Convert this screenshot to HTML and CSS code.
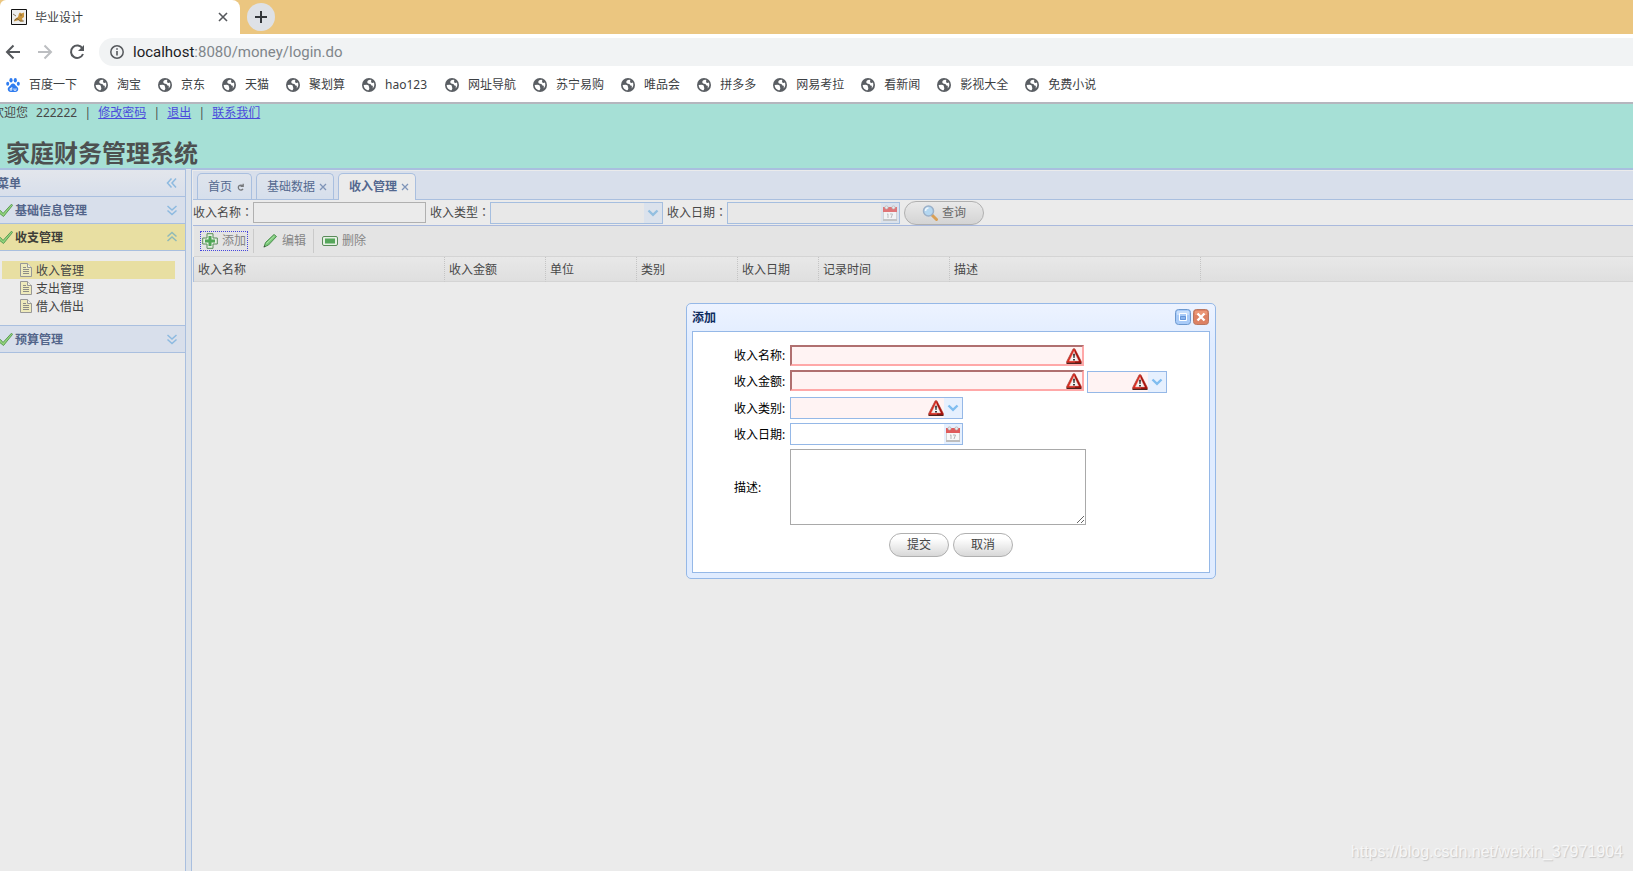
FILE: index.html
```html
<!DOCTYPE html>
<html lang="zh-CN">
<head>
<meta charset="utf-8">
<title>毕业设计</title>
<link rel="stylesheet" href="styles.css">
</head>
<body>
<svg class="defs" aria-hidden="true">
  <symbol id="globe" viewBox="0 0 14 14"><circle cx="7" cy="7" r="7" fill="#5a5e63"/><path d="M1.700 7 4.600 6.800C6 6.900 7 7.500 6.900 8.600 6.800 9.600 7.500 9.700 7.300 10.700L6.600 12.300C3.900 12.100 1.700 9.900 1.700 7z" fill="#fff"/><path d="M8.300 1.800C6.300 2 5.200 3 5.300 4.300 5.400 5.600 6.700 5.700 8 5.900 9.300 6.100 8.800 7.500 10 7.600 11 7.700 11 8.800 10.600 10.600 12.600 8.700 12.700 6.200 11.800 4.600 10.600 5.300 9.400 5 9.100 4 8.900 3.300 9.300 2.600 9.300 2z" fill="#fff"/></symbol>
  <symbol id="check" viewBox="0 0 16 16"><path d="M1 10 3.500 8.500 6 11.500 14.500 2.200 15.600 3.300 6.500 14.500z" fill="#93d67c" stroke="#5a9a55" stroke-width="1"/></symbol>
  <symbol id="down2" viewBox="0 0 16 16"><path d="M3.500 4 8 8 12.500 4M3.500 8.500 8 12.500l4.500-4" fill="none" stroke="#8dbae0" stroke-width="1.500"/></symbol>
  <symbol id="up2" viewBox="0 0 16 16"><path d="M3.500 7.500 8 3.500l4.500 4M3.500 12 8 8l4.500 4" fill="none" stroke="#8fb9b8" stroke-width="1.500"/></symbol>
  <symbol id="page" viewBox="0 0 12 14"><path d="M.5.500h7l4 4v9H.5z" fill="#eeeabb" stroke="#989898"/><path d="M7.500.500v4h4" fill="#f1f1e4" stroke="#989898"/><path d="M3 4.500h3M3 6.500h6M3 8.500h6M3 10.500h6" stroke="#8d8d86"/></symbol>
  <symbol id="warn" viewBox="0 0 16 16"><path d="M7.200.800h1.600L15.300 13.500v1.500H.7v-1.500z" fill="#dc2a1e" stroke="#a84a42" stroke-width=".8"/><path d="M9 1.500 15 13.500v1.500H9z" fill="#a5120c"/><path d="M.5 15.400h15" stroke="#4e2420" stroke-width="1.200"/><path d="M8 3.300 12.700 13H3.300z" fill="#f4f4f4" stroke="#ee9a90" stroke-width=".5"/><path d="M7.200 5.800h1.600L8.500 10h-1zM7.200 11h1.600v1.500H7.200z" fill="#111"/></symbol>
  <symbol id="cal" viewBox="0 0 14 16"><path d="M.5 2.500h13v12H.5z" fill="#f8f8f8" stroke="#d0d0d0"/><path d="M0 2h14v5H0z" fill="#e05b5b"/><path d="M0 15h14" stroke="#bdbdbd" stroke-width="2"/><circle cx="3.500" cy="2.500" r="1.600" fill="#eee" stroke="#aaa" stroke-width=".7"/><circle cx="10.500" cy="2.500" r="1.600" fill="#eee" stroke="#aaa" stroke-width=".7"/><path d="m4 9.500 1-.7v4.200M7 9h2.500L8 13" fill="none" stroke="#b5b5b5"/></symbol>
  <symbol id="arrow" viewBox="0 0 12 8"><path d="M1.500 1.500 6 5.800l4.500-4.300" fill="none" stroke="currentColor" stroke-width="2.400"/></symbol>
  <symbol id="x" viewBox="0 0 8 8"><path d="m1 1 6 6M7 1 1 7" stroke="currentColor" stroke-width="1.300"/></symbol>
</svg>

<header class="browser">
  <div class="tabstrip">
    <div class="btab">
      <svg class="favicon" viewBox="0 0 16 16"><path d="M.5.500h15v15H.5z" fill="#eee" stroke="#111"/><path d="M3 12.500 4.500 9.500 7 8l1-3.500 1-1 1.500 1 2.500-1V8l-2 1.500 1 3H9l-1-1.500z" fill="#c9953f"/><path d="m2 5 3 2M3 11.500l3-2 3 2.500h4M9 6h2" stroke="#6b5a3c" stroke-width=".8" fill="none"/></svg>
      <span class="btitle">毕业设计</span>
      <button class="bclose" aria-label="关闭标签页"><svg width="10" height="10" viewBox="0 0 10 10"><path d="m1 1 8 8M9 1 1 9" stroke="#55585c" stroke-width="1.600"/></svg></button>
    </div>
    <button class="newtab" aria-label="新标签页"><svg width="12" height="12" viewBox="0 0 12 12"><path d="M6 0v12M0 6h12" stroke="#33363a" stroke-width="2"/></svg></button>
  </div>
  <div class="navbar">
    <button class="nav" aria-label="后退"><svg width="16" height="16" viewBox="0 0 16 16"><path d="M15 8H2M8.500 1.500 2 8l6.500 6.500" fill="none" stroke="#55585c" stroke-width="2"/></svg></button>
    <button class="nav" aria-label="前进"><svg width="16" height="16" viewBox="0 0 16 16"><path d="M1 8h13M7.500 1.500 14 8l-6.500 6.500" fill="none" stroke="#bcbec1" stroke-width="2"/></svg></button>
    <button class="nav" aria-label="刷新"><svg width="16" height="16" viewBox="0 0 16 16"><path d="M13.500 4.500A6.200 6.200 0 1 0 14 10" fill="none" stroke="#55585c" stroke-width="2"/><path d="M15 1v6H9z" fill="#55585c"/></svg></button>
    <div class="address">
      <svg width="14" height="14" viewBox="0 0 14 14"><circle cx="7" cy="7" r="6.200" fill="none" stroke="#55585c" stroke-width="1.500"/><path d="M7 6v4.500M7 3.200v1.600" stroke="#55585c" stroke-width="1.600"/></svg>
      <span class="url"><b>localhost</b>:8080/money/login.do</span>
    </div>
  </div>
  <nav class="bookmarks">
    <a href="#"><svg viewBox="0 0 14 14"><g fill="#2f7cf0"><ellipse cx="5" cy="2.300" rx="1.600" ry="2.200"/><ellipse cx="9.300" cy="2.300" rx="1.600" ry="2.200"/><ellipse cx="1.700" cy="5.800" rx="1.500" ry="2"/><ellipse cx="12.300" cy="5.800" rx="1.500" ry="2"/><path d="M7 5.500c1.800 0 2.300 1.800 3.500 2.800 1.600 1.400 2 2.300 1.600 3.700-.4 1.700-2 2-5.100 2s-4.700-.3-5.100-2c-.4-1.400 0-2.300 1.600-3.700C4.700 7.300 5.200 5.500 7 5.500z"/></g><path d="M5.800 9v3.200H4.200V10.500h1.500M8 10.300v2h2v-2" fill="none" stroke="#fff" stroke-width=".8"/></svg>百度一下</a>
    <a href="#"><svg><use href="#globe"/></svg>淘宝</a>
    <a href="#"><svg><use href="#globe"/></svg>京东</a>
    <a href="#"><svg><use href="#globe"/></svg>天猫</a>
    <a href="#"><svg><use href="#globe"/></svg>聚划算</a>
    <a href="#"><svg><use href="#globe"/></svg><span class="latin">hao123</span></a>
    <a href="#"><svg><use href="#globe"/></svg>网址导航</a>
    <a href="#"><svg><use href="#globe"/></svg>苏宁易购</a>
    <a href="#"><svg><use href="#globe"/></svg>唯品会</a>
    <a href="#"><svg><use href="#globe"/></svg>拼多多</a>
    <a href="#"><svg><use href="#globe"/></svg>网易考拉</a>
    <a href="#"><svg><use href="#globe"/></svg>看新闻</a>
    <a href="#"><svg><use href="#globe"/></svg>影视大全</a>
    <a href="#"><svg><use href="#globe"/></svg>免费小说</a>
  </nav>
</header>

<div class="app">
  <header class="north">
    <div class="welcome"><span class="hello">欢迎您</span><span>222222</span><i>|</i><a href="#">修改密码</a><i>|</i><a href="#">退出</a><i>|</i><a href="#">联系我们</a></div>
    <h1>家庭财务管理系统</h1>
  </header>
  <div class="columns">
    <aside class="west">
      <div class="west-title"><span>菜单</span><button class="tool" aria-label="折叠"><svg class="ico" viewBox="0 0 16 16"><path d="M7.500 3.500 3.500 8l4 4.500M12 3.500 8 8l4 4.500" fill="none" stroke="#8dbae0" stroke-width="1.500"/></svg></button></div>
      <div class="acc"><svg class="ico"><use href="#check"/></svg><span>基础信息管理</span><button class="tool" aria-label="展开"><svg class="ico"><use href="#down2"/></svg></button></div>
      <div class="acc open"><svg class="ico"><use href="#check"/></svg><span>收支管理</span><button class="tool" aria-label="收起"><svg class="ico"><use href="#up2"/></svg></button></div>
      <ul class="tree">
        <li class="on"><svg><use href="#page"/></svg><span>收入管理</span></li>
        <li><svg><use href="#page"/></svg><span>支出管理</span></li>
        <li><svg><use href="#page"/></svg><span>借入借出</span></li>
      </ul>
      <div class="acc"><svg class="ico"><use href="#check"/></svg><span>预算管理</span><button class="tool" aria-label="展开"><svg class="ico"><use href="#down2"/></svg></button></div>
    </aside>
    <main class="center">
      <div class="tabs">
        <div class="tab home">首页<button class="tool" aria-label="刷新"><svg width="8" height="8" viewBox="0 0 8 8"><path d="M5.800 3A2.500 2.500 0 1 0 6 5.800M6.200.800v2.600H3.500" fill="none" stroke="#77797d" stroke-width="1.300"/></svg></button></div>
        <div class="tab">基础数据<button class="tool" aria-label="关闭"><svg width="8" height="8"><use href="#x"/></svg></button></div>
        <div class="tab active">收入管理<button class="tool" aria-label="关闭"><svg width="8" height="8"><use href="#x"/></svg></button></div>
      </div>
      <form class="search">
        <label for="q-name">收入名称<span class="colon" lang="zh-TW">：</span></label><input id="q-name" class="plain" type="text">
        <label for="q-type">收入类型<span class="colon" lang="zh-TW">：</span></label><span class="combo dim"><select id="q-type"></select><span class="addon"><svg width="12" height="8"><use href="#arrow"/></svg></span></span>
        <label for="q-date">收入日期<span class="colon" lang="zh-TW">：</span></label><span class="combo dim"><input id="q-date" type="text"><span class="addon"><svg class="cal"><use href="#cal"/></svg></span></span>
        <button type="button" class="pill find"><svg class="ico" viewBox="0 0 16 16"><path d="m10 10 4.500 4.500" stroke="#d9a056" stroke-width="3" stroke-linecap="round"/><circle cx="6.500" cy="6" r="5" fill="#b4d7f1" stroke="#9bb0c8" stroke-width="1.500"/><path d="M3.500 6a3 3 0 0 1 3-3" stroke="#eef6fc" stroke-width="1.500" fill="none"/></svg>查询</button>
      </form>
      <div class="toolbar">
        <button class="tb focus"><svg class="ico" viewBox="0 0 16 16"><path d="M5 .7h6V5h4.300v6H11v4.300H5V11H.7V5H5z" fill="#e6f0e4" stroke="#5a8c5a"/><path d="M6.500 3h3v3.500H13v3H9.500V13h-3V9.500H3v-3h3.500z" fill="#4fa655"/></svg>添加</button>
        <i class="sep"></i>
        <button class="tb"><svg class="ico" viewBox="0 0 16 16"><path d="m2 14 1.500-4.500L12 1.500l2.500 2L6.500 12z" fill="#79c878" stroke="#4e8f50"/><path d="m4.500 10.500 8-7.500" stroke="#b5e5ac"/><path d="m1.500 14.500 1-2 1 1z" fill="#444"/></svg>编辑</button>
        <i class="sep"></i>
        <button class="tb"><svg class="ico" viewBox="0 0 16 16"><rect x=".5" y="3.500" width="15" height="9" rx="1.500" fill="#e6f0e4" stroke="#5a8c5a"/><path d="M3 5.500h10v5H3z" fill="#55a65a"/></svg>删除</button>
      </div>
      <table class="grid">
        <colgroup><col class="w251"><col class="w101"><col class="w91"><col class="w101"><col class="w81"><col class="w131"><col class="w251"><col></colgroup>
        <thead><tr><th>收入名称</th><th>收入金额</th><th>单位</th><th>类别</th><th>收入日期</th><th>记录时间</th><th>描述</th><td></td></tr></thead>
      </table>
    </main>
  </div>
</div>

<section class="window" role="dialog" aria-labelledby="dlg-title">
  <div class="win-head">
    <h2 id="dlg-title">添加</h2>
    <button class="tool" aria-label="最大化"><svg class="ico" viewBox="0 0 16 16"><rect x=".5" y=".5" width="15" height="15" rx="3" fill="#a9cbf8" stroke="#6c98cf"/><path d="M2 2h12v4H2z" fill="#c8defb"/><path d="M4.500 4.500h7v7h-7z" fill="#a9cbf8" stroke="#fff"/><path d="M5.500 7.500h5v3h-5z" fill="#8ab4ee" stroke="#5b8cd2" stroke-width=".8"/></svg></button>
    <button class="tool" aria-label="关闭"><svg class="ico" viewBox="0 0 16 16"><rect x=".5" y=".5" width="15" height="15" rx="3" fill="#dd8163" stroke="#b9765f"/><path d="M2 2h12v4H2z" fill="#eb9675"/><path d="m4.500 4.500 7 7M11.500 4.500l-7 7" stroke="#fff" stroke-width="2.400"/></svg></button>
  </div>
  <form class="win-body">
    <div class="fields">
      <label for="f-name">收入名称:</label>
      <span class="bad"><input id="f-name" type="text"><svg class="ico"><use href="#warn"/></svg></span>
      <label for="f-sum">收入金额:</label>
      <div class="pair">
        <span class="bad"><input id="f-sum" type="text"><svg class="ico"><use href="#warn"/></svg></span>
        <span class="combo req unit"><select aria-label="单位"></select><svg class="ico"><use href="#warn"/></svg><span class="addon"><svg width="12" height="8"><use href="#arrow"/></svg></span></span>
      </div>
      <label for="f-kind">收入类别:</label>
      <span class="combo req"><select id="f-kind"></select><svg class="ico"><use href="#warn"/></svg><span class="addon"><svg width="12" height="8"><use href="#arrow"/></svg></span></span>
      <label for="f-date">收入日期:</label>
      <span class="combo"><input id="f-date" type="text"><span class="addon"><svg class="cal"><use href="#cal"/></svg></span></span>
      <label for="f-desc">描述:</label>
      <textarea id="f-desc"></textarea>
    </div>
    <div class="actions"><button type="button" class="pill">提交</button><button type="button" class="pill">取消</button></div>
  </form>
</section>
<div class="watermark">https://blog.csdn.net/weixin_37971904</div>
</body>
</html>
```

FILE: styles.css
```css
* { box-sizing: border-box; }
body {
  margin: 0;
  min-height: 100vh;
  display: flex;
  flex-direction: column;
  overflow: hidden;
  position: relative;
  background: #ebebeb;
  font: 12px/18px "Noto Sans", "Noto Sans CJK SC", sans-serif;
  color: #484848;
}
svg { display: block; flex: none; }
.defs { position: absolute; width: 0; height: 0; }
button, input, select, textarea { font: inherit; color: inherit; margin: 0; }
button { border: 0; padding: 0; background: none; display: flex; align-items: center; justify-content: center; }
i { font-style: normal; }
.ico { width: 16px; height: 16px; }

/* browser frame */
.browser { background: #fff; border-bottom: 2px solid #b5b6be; }
.tabstrip { display: flex; height: 34px; background: #ebc680; align-items: center; gap: 7px; }
.btab {
  display: flex; align-items: center; gap: 8px;
  width: 240px; height: 34px; padding: 0 12px 0 11px;
  background: #fff; border-radius: 6px 8px 0 0;
}
.favicon { width: 16px; height: 16px; }
.btitle { flex: 1; padding-top: 1px; color: #3c4043; }
.newtab { width: 28px; height: 28px; border-radius: 50%; background: #dee1e6; }
.navbar { display: flex; align-items: center; height: 36px; padding: 4px 0 4px 5px; gap: 16px; }
.nav { width: 16px; height: 16px; }
.address {
  flex: 1; display: flex; align-items: center; gap: 9px;
  height: 28px; margin-left: -2px; padding-left: 11px;
  background: #f1f3f4; border-radius: 14px 0 0 14px;
}
.url { font: 15px/20px Roboto, "Noto Sans", sans-serif; color: #80868b; }
.url b { font-weight: 400; color: #202124; }
.bookmarks { display: flex; align-items: center; height: 32px; gap: 17px; padding: 0 0 3px 6px; }
.bookmarks a { display: flex; align-items: center; gap: 9px; color: #3c4043; text-decoration: none; white-space: nowrap; }
.bookmarks svg { width: 14px; height: 14px; }
.latin { width: 43px; }

/* page: scrolled 8px past the left edge */
.app { flex: 1; display: flex; flex-direction: column; margin-left: -8px; }
.north { background: #a6e0d6; border-bottom: 1px solid #a9bfdf; }
.welcome { display: flex; }
.welcome .hello { margin-right: 8px; }
.welcome i { width: 21px; text-align: center; }
.welcome a { color: #4b4bdc; }
h1 { margin: 16px 0 0 14px; font-size: 24px; line-height: 30px; font-weight: 700; color: #4d5050; }
.columns { flex: 1; display: flex; gap: 5px; background: #dce2ea; }

.west { width: 194px; flex: none; background: #ebebeb; border: solid #a9bfdf; border-width: 1px 1px 0 0; color: #53658a; font-weight: 700; }
.west-title, .acc { display: flex; align-items: center; padding: 0 5px; border-bottom: 1px solid #a9bfdf; background: #d8dfeb; }
.west-title { height: 27px; background: linear-gradient(#e3e6ec, #d8dfeb); }
.acc { height: 27px; gap: 2px; }
.acc span, .west-title span { flex: 1; padding-top: 2px; }
.acc.open { background: #e8dfa2; color: #3f3f3a; }
.tree { list-style: none; margin: 0; padding: 10px; border-bottom: 1px solid #a9bfdf; font-weight: 400; color: #444; }
.tree li { display: flex; align-items: center; gap: 4px; height: 18px; padding-left: 18px; }
.tree span { padding-top: 2px; }
.tree svg { width: 12px; height: 14px; }
.tree .on { background: #e8dfa2; }

.center { flex: 1; min-width: 0; display: flex; flex-direction: column; background: #ebebeb; border: solid #a9bfdf; border-width: 1px 0 0 1px; padding: 1px 0 0 1px; }
.tabs { display: flex; align-items: flex-end; gap: 4px; height: 29px; padding-left: 4px; background: #d8dfeb; border-bottom: 1px solid #a9bfdf; }
.tab { display: flex; align-items: center; gap: 3px; height: 26px; padding: 0 6px 0 10px; border: 1px solid #a9bfdf; border-bottom: 0; border-radius: 5px 5px 0 0; background: linear-gradient(#dfe4ec, #d6dfec); color: #53688f; }
.tab.home { gap: 4px; }
.tab .tool { width: 9px; color: #7f94b8; }
.tab.active { margin-bottom: -1px; height: 27px; background: #ebebeb; font-weight: 700; }

.search { display: flex; align-items: center; gap: 4px; height: 26px; border-bottom: 1px solid #a9b9dd; }
.search label { width: 56px; white-space: nowrap; }
.colon { font-family: "Noto Sans CJK TC", sans-serif; }
.plain { width: 173px; height: 21px; border: 1px solid #b0b0b0; background: #ebebeb; }
.combo { display: flex; align-items: center; width: 173px; height: 22px; border: 1px solid #95b8e7; background: #fff; color: #7fbdf0; }
.combo input, .combo select { flex: 1; min-width: 0; height: 20px; border: 0; padding: 0 2px; background: transparent; appearance: none; outline: 0; }
.combo.dim { background: #e8e8e8; border-color: #a5bedf; color: #93bfe0; }
.dim .addon { background: #dbe2ec; }
.dim .cal { opacity: .8; }
.addon { width: 18px; height: 20px; display: flex; align-items: center; justify-content: center; background: #e6f0fe; }
.cal { width: 14px; height: 16px; }
.pill { width: 60px; height: 24px; border: 1px solid #b0b0b0; border-radius: 12px; background: linear-gradient(#fff 20%, #d8d8d8); color: #444; }
.find { width: 80px; gap: 4px; background: linear-gradient(#e9e9e9, #d4d4d4); color: #6a6a6a; }

.toolbar { display: flex; align-items: center; height: 31px; margin-left: 1px; padding-left: 7px; background: #e4e4e4; border-bottom: 1px solid #d4d4d4; color: #858585; }
.tb { gap: 4px; height: 18px; padding: 0 1px; }
.focus { outline: 1px dotted #4646dd; }
.sep { width: 1px; height: 24px; margin: 0 7px 0 6px; background: #cacaca; }
.grid { width: 100%; table-layout: fixed; border-collapse: separate; border-spacing: 0; border-left: 1px solid #a9bfdf; }
.grid th, .grid td { height: 25px; padding: 2px 4px 0; text-align: left; font-weight: 400; border-bottom: 1px solid #d4d4d4; background: linear-gradient(#e8e8e8, #dfdfdf); }
.grid th { border-right: 1px dotted #c4c4c4; }
.w251 { width: 251px; } .w131 { width: 131px; } .w101 { width: 101px; } .w91 { width: 91px; } .w81 { width: 81px; }

/* floating dialog */
.window { position: absolute; left: 686px; top: 303px; width: 530px; padding: 0 5px 5px; border: 1px solid #95b8e7; border-radius: 5px; background: linear-gradient(#edf3ff, #e0ecff 40px); color: #000; }
.win-head { display: flex; align-items: center; gap: 2px; height: 27px; padding: 0 1px 2px 0; }
.win-head h2 { flex: 1; margin: 0; padding-top: 2px; font-size: 12px; line-height: 18px; color: #0e2d5f; }
.win-body { padding: 13px 41px 15px; border: 1px solid #95b8e7; background: #fff; }
.fields { display: grid; grid-template-columns: 52px 1fr; gap: 4px; align-items: center; }
.fields label { padding-top: 1px; white-space: nowrap; }
.bad { display: flex; align-items: center; width: 294px; height: 21px; border: 2px solid; border-color: #b07070 #ffa8a8 #ffa8a8 #b07070; background: #fff3f3; }
.bad input { flex: 1; min-width: 0; height: 16px; border: 0; background: transparent; outline: 0; }
.pair { display: flex; align-items: flex-start; gap: 3px; }
.pair .unit { width: 80px; margin-top: 1px; }
.req { background: #fff3f3; }
.fields textarea { display: block; width: 296px; height: 76px; border: 1px solid #a9a9a9; background: #fff; }
.actions { display: flex; justify-content: center; gap: 4px; margin-top: 8px; }
.watermark { position: absolute; right: 10px; bottom: 8px; font: 16px/22px "Liberation Sans", Arial, sans-serif; color: #f6f6f6; text-shadow: 1px 1px 1px #c8c8c8; }
```
